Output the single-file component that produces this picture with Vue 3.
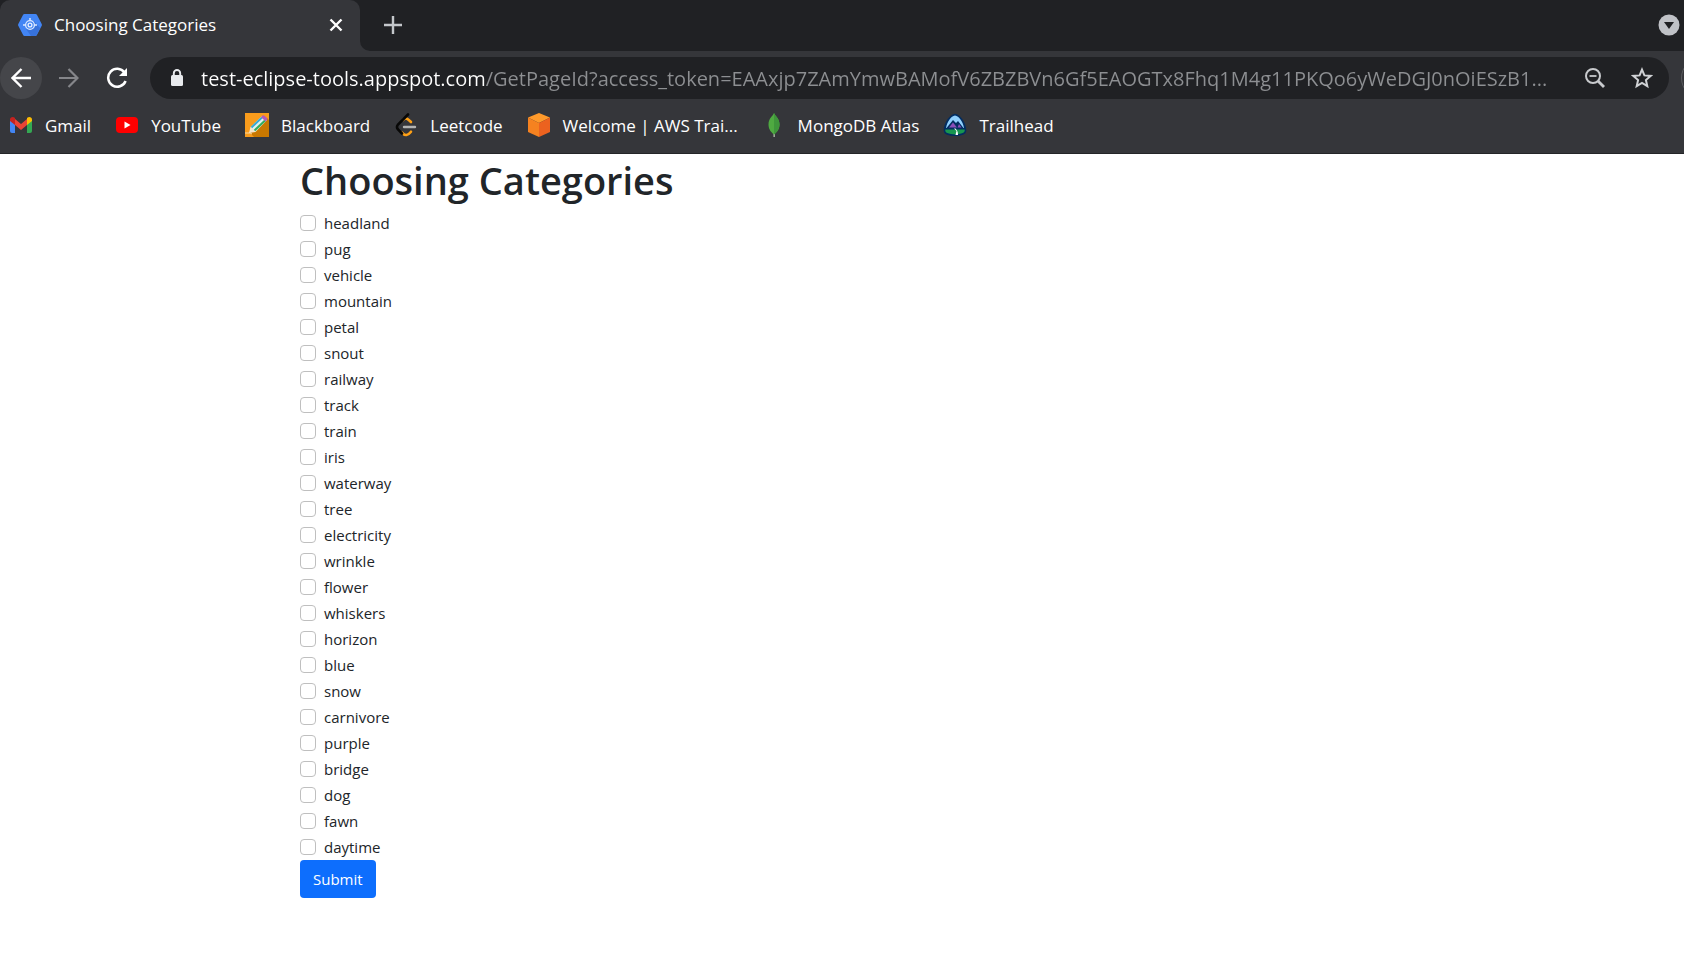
<script setup>
import { ref } from 'vue'

const url = ref('test-eclipse-tools.appspot.com/GetPageId?access_token=EAAxjp7ZAmYmwBAMofV6ZBZBVn6Gf5EAOGTx8Fhq1M4g11PKQo6yWeDGJ0nOiESzB1...')
const categories = [
  'headland', 'pug', 'vehicle', 'mountain', 'petal', 'snout', 'railway', 'track', 'train',
  'iris', 'waterway', 'tree', 'electricity', 'wrinkle', 'flower', 'whiskers', 'horizon',
  'blue', 'snow', 'carnivore', 'purple', 'bridge', 'dog', 'fawn', 'daytime',
]
const selected = ref([])
</script>

<template>
  <div class="browser">
    <header class="chrome">
      <div class="tabstrip">
        <div class="tab">
          <svg class="icon" viewBox="0 0 24 24" aria-hidden="true">
            <path d="M6.500 1h11a1.600 1.600 0 0 1 1.400.8l4.800 9.200a2 2 0 0 1 0 1.800l-4.800 9.200a1.600 1.600 0 0 1-1.400.9h-11a1.600 1.600 0 0 1-1.400-.9L.3 12.800a2 2 0 0 1 0-1.800l4.800-9.200A1.600 1.600 0 0 1 6.500 1Z" fill="#4285f4" />
            <path d="M16 8l6 7-3.500 7a1.600 1.600 0 0 1-1.400.9H13L8 16Z" fill="#3772da" />
            <circle cx="12" cy="12" r="4.400" fill="#4285f4" stroke="#dce9ff" stroke-width="1.300" />
            <circle cx="12" cy="12" r="1.900" fill="none" stroke="#e8f0ff" stroke-width="1.300" />
            <path d="M12 5v2.500M5 12h2.500M16.500 12H19" stroke="#dce9ff" stroke-width="1.500" />
          </svg>
          <span class="tab-title">Choosing Categories</span>
          <button class="plain close" aria-label="Close tab">
            <svg viewBox="0 0 14 14" width="14" height="14"><path d="M1.500 1.500l11 11M12.500 1.500l-11 11" stroke="#fff" stroke-width="2.400" /></svg>
          </button>
        </div>
        <svg class="fillet" viewBox="0 0 10 10" width="10" height="10" aria-hidden="true"><path d="M0 0v10h10A10 10 0 0 1 0 0Z" fill="#35363a" /></svg>
        <button class="plain newtab" aria-label="New tab">
          <svg viewBox="0 0 18 18" width="18" height="18"><path d="M9 0v18M0 9h18" stroke="#c4c7cb" stroke-width="2.400" /></svg>
        </button>
        <button class="plain search-tabs" aria-label="Search tabs">
          <svg viewBox="0 0 22 22" width="22" height="22"><circle cx="11" cy="11" r="10.500" fill="#c0c2c7" /><path d="M6 8h10l-5 7Z" fill="#202124" /></svg>
        </button>
      </div>

      <div class="toolbar">
        <button class="plain nav back" aria-label="Back">
          <svg viewBox="0 0 20 20" width="20" height="20"><path d="M20 10H2M10.500 1L1.500 10l9 9" fill="none" stroke="#fff" stroke-width="2.400" /></svg>
        </button>
        <button class="plain nav" aria-label="Forward">
          <svg viewBox="0 0 20 20" width="20" height="20"><path d="M0 10h18M9.500 1l9 9-9 9" fill="none" stroke="#85868a" stroke-width="2.200" /></svg>
        </button>
        <button class="plain nav" aria-label="Reload">
          <svg viewBox="0 0 22 22" width="22" height="22"><path d="M18.500 5.500A9 9 0 1 0 19.600 14" fill="none" stroke="#fff" stroke-width="2.500" /><path d="M21 1v8h-8Z" fill="#fff" /></svg>
        </button>
        <div class="omnibox">
          <svg viewBox="0 0 14 18" width="14" height="18" aria-hidden="true"><rect x="1" y="6" width="12" height="11" rx="1.500" fill="#e8eaed" /><path d="M3.800 7V4.200a3.200 3.200 0 0 1 6.400 0V7" fill="none" stroke="#e8eaed" stroke-width="1.900" /></svg>
          <input v-model="url" class="address" type="text" aria-label="Address" spellcheck="false">
          <button class="plain" aria-label="Zoom">
            <svg viewBox="0 0 20 20" width="20" height="20"><circle cx="8" cy="8" r="7" fill="none" stroke="#c8cacd" stroke-width="2" /><path d="M4.500 8h7" stroke="#c8cacd" stroke-width="1.800" /><path d="M13 13l6 6" stroke="#c8cacd" stroke-width="2.800" /></svg>
          </button>
          <button class="plain" aria-label="Bookmark this page">
            <svg viewBox="0 0 22 22" width="22" height="22"><path d="M11 2.600l2.400 5.800 6.200.5-4.700 4.100 1.400 6.100L11 15.900l-5.300 3.200 1.400-6.100-4.700-4.100 6.200-.5Z" fill="none" stroke="#d0d2d5" stroke-width="2" /></svg>
          </button>
        </div>
        <span class="profile"></span>
      </div>

      <nav class="bookmarks" aria-label="Bookmarks">
        <a href="#">
          <svg class="icon" viewBox="0 0 24 24" aria-hidden="true">
            <path d="M1 6v12a2 2 0 0 0 2 2h3V9Z" fill="#4285f4" />
            <path d="M23 6v12a2 2 0 0 1-2 2h-3V9Z" fill="#34a853" />
            <path d="M6 6l6 5 6-5v6l-6 5-6-5Z" fill="#ea4335" />
            <path d="M1 6.500C1 4 4 3 6 5v7L1 8Z" fill="#c5221f" />
            <path d="M23 6.500C23 4 20 3 18 5v7l5-4Z" fill="#fbbc04" />
          </svg>Gmail</a>
        <a href="#">
          <svg class="icon" viewBox="0 0 24 24" aria-hidden="true"><rect x="1" y="4" width="22" height="16" rx="4" fill="#f00" /><path d="M9.500 8.500v7l6-3.500Z" fill="#fff" /></svg>YouTube</a>
        <a href="#">
          <svg class="icon" viewBox="0 0 24 24" aria-hidden="true">
            <path d="M0 0h24v24H0Z" fill="#f99c1c" />
            <path d="M22 5l2 2v17H9l-4-4Z" fill="#c97800" />
            <path d="M0 20h5l2 1" fill="none" stroke="#f7d9a4" />
            <path d="M4 20l1.500-6L17 3l5 4L10.500 19Z" fill="#f4e5cc" />
            <path d="M6.500 14.500L17 4.500" stroke="#35a9d6" stroke-width="2" />
            <path d="M8 16L18.500 6" stroke="#d7f4fa" stroke-width="1.500" />
            <path d="M9.500 17.500L20 7.500" stroke="#2fad62" stroke-width="2" />
            <path d="M16 4l1.500-1.500q1-.5 2 .2L22 5q.7 1 0 2l-1.500 1.500Z" fill="#b65bb5" />
          </svg>Blackboard</a>
        <a href="#">
          <svg class="icon" viewBox="0 0 24 24" aria-hidden="true">
            <path d="M9 7c3-3 5-1 8 2M8 19.500c3 4 6 3 9-.8" fill="none" stroke="#ffa116" stroke-width="2.600" stroke-linecap="round" />
            <path d="M14 1.500L4 11.500q-2 2.500 0 5l4 4" fill="none" stroke="#070706" stroke-width="2.600" stroke-linecap="round" />
            <path d="M10 14h11" stroke="#b3b3b3" stroke-width="2.400" stroke-linecap="round" />
          </svg>Leetcode</a>
        <a href="#">
          <svg class="icon" viewBox="0 0 24 24" aria-hidden="true"><path d="M12 0l11 4.500L12 10 1 4.500Z" fill="#ff9a2b" /><path d="M1 4.500L12 10v14L1 19Z" fill="#f58220" /><path d="M23 4.500L12 10v14l11-5Z" fill="#ec621f" /></svg>Welcome | AWS Trai...</a>
        <a href="#">
          <svg class="icon" viewBox="0 0 24 24" aria-hidden="true"><path d="M11.500 20h1.300v4h-1.300Z" fill="#b8c4b0" /><path d="M12 0c1 3 5.500 5 5.500 11.500 0 5-3 8-5.500 10-2.500-2-5.500-5-5.500-10C6.500 5 11 3 12 0Z" fill="#4faa41" /><path d="M12 0c1 3 5.500 5 5.500 11.500 0 5-3 8-5.500 10Z" fill="#3f963b" /></svg>MongoDB Atlas</a>
        <a href="#">
          <svg class="icon" viewBox="0 0 24 24" aria-hidden="true">
            <path d="M12 .8C17 1 23.300 10 23.300 17.500c0 2.500-1.500 3.500-3.300 4.200-4.500 1.800-11.500 1.800-16 0C2.200 21 .7 20 .7 17.500.7 10 7 1 12 .8Z" fill="#032d60" />
            <path d="M12 2.500C16 3 20 9 21 15H3C4 9 8 3 12 2.500Z" fill="#90d0fe" />
            <path d="M3.500 15L10 7l3 3 2-2 5.500 7Z" fill="#032d60" />
            <path d="M6 14.500l4-5 4 5ZM14.500 14.500l1.500-3.500 2.500 3.500Z" fill="#8a4fb8" />
            <path d="M2.300 16.500h19.400c.3 2-.5 3-2 3.600-4 1.800-11.400 1.800-15.400 0-1.500-.6-2.300-1.600-2-3.600Z" fill="#17964f" />
            <path d="M11 15.500l2.500 2.500-1 4h2.500q0-3.500-1-4.500l-1.500-2Z" fill="#fff" />
          </svg>Trailhead</a>
      </nav>
    </header>

    <main class="container">
      <h1>Choosing Categories</h1>
      <form @submit.prevent>
        <div v-for="name in categories" :key="name" class="check">
          <input :id="name" v-model="selected" type="checkbox" :value="name">
          <label :for="name">{{ name }}</label>
        </div>
        <button class="submit" type="submit">Submit</button>
      </form>
    </main>
  </div>
</template>

<style>
body { margin: 0; background: #fff; }
</style>

<style scoped>
* { box-sizing: border-box; }
.browser { font-family: "Segoe UI", "Open Sans", "Noto Sans", sans-serif; color: #212529; }
.chrome { background: #35363a; border-bottom: 1px solid #242528; color: #fff; }
svg { display: block; flex: none; }
.icon { width: 24px; height: 24px; }
.plain { display: flex; align-items: center; justify-content: center; padding: 0; border: 0; background: none; cursor: pointer; }

.tabstrip { display: flex; align-items: center; height: 51px; background: #202124; padding-right: 4px; }
.tab { display: flex; align-items: center; width: 360px; height: 51px; padding: 0 17px 2px 18px; background: #35363a; border-radius: 10px 10px 0 0; font-size: 17px; }
.tab-title { flex: 1; margin-left: 12px; white-space: nowrap; }
.close { width: 14px; }
.fillet { align-self: flex-end; }
.newtab { height: 51px; padding-bottom: 2px; margin-left: 14px; }
.search-tabs { height: 51px; padding-bottom: 2px; margin-left: auto; }

.toolbar { display: flex; align-items: center; height: 54px; overflow: hidden; }
.nav { flex: none; width: 42px; height: 42px; margin-right: 6px; border-radius: 50%; }
.back { background: #45464a; }
.omnibox { flex: 1; min-width: 0; display: flex; align-items: center; height: 42px; margin-left: 6px; padding: 0 16px 0 20px; gap: 26px; border-radius: 21px; background: #202124; }
.address { flex: 1; min-width: 0; height: 42px; margin-left: -9px; padding: 0; border: 0; outline: 0; font-family: inherit; font-size: 20px; color: transparent; background: linear-gradient(90deg, #fff 285px, #8d8f92 285px); background-clip: text; caret-color: #fff; }
.profile { flex: none; width: 42px; height: 42px; margin: 0 -39px 0 12px; border-radius: 50%; border: 1px solid #5a5b5f; }

.bookmarks { display: flex; align-items: center; gap: 24px; height: 48px; padding: 0 9px 8px; font-size: 17px; white-space: nowrap; }
.bookmarks a { display: flex; align-items: center; gap: 12px; color: #fff; text-decoration: none; }

.container { max-width: 1108px; margin: 0 auto; padding: 0 12px; }
h1 { margin: 0 0 4px; font-size: 38px; font-weight: 600; line-height: 52px; }
.check { display: flex; align-items: center; gap: 8px; height: 26px; font-size: 15px; }
.check input { appearance: none; flex: none; width: 16px; height: 16px; margin: 0; border: 1px solid #bfbfbf; border-radius: 4px; background: #fff; }
.check input:checked { background: #0d6efd; border-color: #0d6efd; }
.submit { display: block; height: 38px; padding: 0 13px; border: 0; border-radius: 4px; background: #0d6efd; color: #fff; font-family: inherit; font-size: 15px; cursor: pointer; }
</style>
